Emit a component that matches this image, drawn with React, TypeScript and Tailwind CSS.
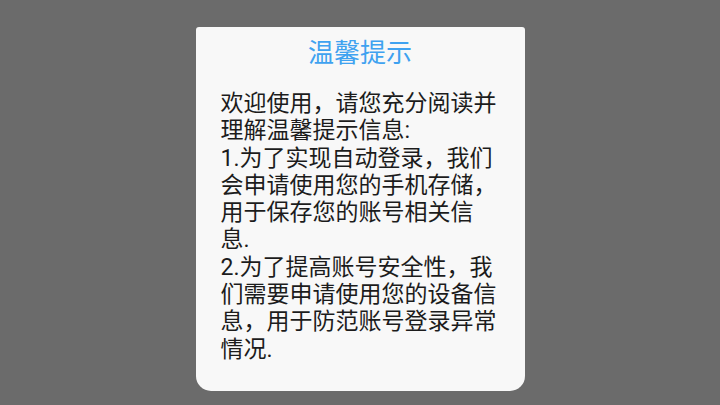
const lines = [
  '欢迎使用，请您充分阅读并',
  '理解温馨提示信息:',
  '1.为了实现自动登录，我们',
  '会申请使用您的手机存储，',
  '用于保存您的账号相关信',
  '息.',
  '2.为了提高账号安全性，我',
  '们需要申请使用您的设备信',
  '息，用于防范账号登录异常',
  '情况.',
];

export default function App() {
  return (
    <div
      className="w-[720px] h-[405px] bg-[#6b6b6b] flex justify-center overflow-hidden"
      style={{ fontFamily: 'Roboto, "Noto Sans CJK SC", sans-serif' }}
    >
      <div className="mt-[27px] w-[329px] h-[364px] bg-[#f8f8f8] rounded-t-[3px] rounded-b-[15px] flex flex-col">
        {/* title */}
        <div className="pt-[9px] text-center text-[26px] leading-[34px] text-[#3fa2f0]">
          温馨提示
        </div>
        {/* body */}
        <div className="mt-[20px] px-[25px] text-[23px] leading-[27.3px] text-[#1c1c1c]">
          {lines.map((l, i) => (
            <div key={i} className="whitespace-nowrap">
              {l}
            </div>
          ))}
        </div>
      </div>
    </div>
  );
}
